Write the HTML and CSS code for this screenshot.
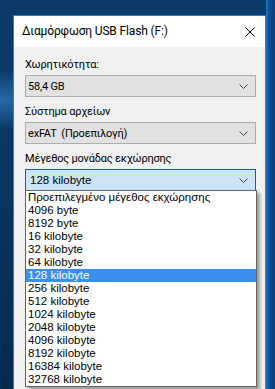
FILE: index.html
```html
<!DOCTYPE html>
<html lang="el">
<head>
    <meta charset="UTF-8">
    <title>Διαμόρφωση USB Flash (F:)</title>
    <link rel="stylesheet" href="styles.css">
</head>
<body>
    <div class="window">
        <div class="titlebar">
            <span class="title">Διαμόρφωση USB Flash (F:)</span>
            <svg class="close" width="10" height="10" viewBox="0 0 10 10">
                <path d="M0.5 0.5 L9.5 9.5 M9.5 0.5 L0.5 9.5" stroke="#000" stroke-width="1" fill="none"/>
            </svg>
        </div>

        <div class="content">
            <div class="field">
                <div class="label">Χωρητικότητα:</div>
                <div class="combo">
                    <span class="value">58,4 GB</span>
                    <svg class="chevron" width="9" height="5" viewBox="0 0 9 5">
                        <path d="M0.5 0.5 L4.5 4.5 L8.5 0.5" stroke="#404040" stroke-width="1" fill="none"/>
                    </svg>
                </div>
            </div>

            <div class="field">
                <div class="label">Σύστημα αρχείων</div>
                <div class="combo">
                    <span class="value">exFAT  (Προεπιλογή)</span>
                    <svg class="chevron" width="9" height="5" viewBox="0 0 9 5">
                        <path d="M0.5 0.5 L4.5 4.5 L8.5 0.5" stroke="#404040" stroke-width="1" fill="none"/>
                    </svg>
                </div>
            </div>

            <div class="field">
                <div class="label">Μέγεθος μονάδας εκχώρησης</div>
                <div class="combo focused">
                    <span class="value small">128 kilobyte</span>
                    <svg class="chevron" width="9" height="5" viewBox="0 0 9 5">
                        <path d="M0.5 0.5 L4.5 4.5 L8.5 0.5" stroke="#404040" stroke-width="1" fill="none"/>
                    </svg>

                    <ul class="listbox">
                        <li>Προεπιλεγμένο μέγεθος εκχώρησης</li>
                        <li>4096 byte</li>
                        <li>8192 byte</li>
                        <li>16 kilobyte</li>
                        <li>32 kilobyte</li>
                        <li>64 kilobyte</li>
                        <li class="selected">128 kilobyte</li>
                        <li>256 kilobyte</li>
                        <li>512 kilobyte</li>
                        <li>1024 kilobyte</li>
                        <li>2048 kilobyte</li>
                        <li>4096 kilobyte</li>
                        <li>8192 kilobyte</li>
                        <li>16384 kilobyte</li>
                        <li>32768 kilobyte</li>
                    </ul>
                </div>
            </div>
        </div>
    </div>
</body>
</html>
```

FILE: styles.css
```css
* {
    margin: 0;
    padding: 0;
    box-sizing: border-box;
}

body {
    width: 275px;
    height: 389px;
    overflow: hidden;
    font-family: Roboto, "Noto Sans", sans-serif;
    font-size: 11px;
    letter-spacing: -0.2px;
    color: #000;
    background:
        linear-gradient(90deg, transparent 266px, #1f78cc 266px, #0d4f96 269px, #083c78 275px),
        radial-gradient(ellipse 60px 30px at 0 100px, #2a6aa8, transparent),
        linear-gradient(180deg, #0c3a6a 0%, #0a355f 50%, #062a4e 100%);
    padding: 15px 0 0 13px;
}

.window {
    width: 253px;
    height: 380px;
    background-color: #f0f0f0;
    border: 1px solid #2a7fd0;
    border-bottom: none;
}

.titlebar {
    height: 31px;
    background-color: #fff;
    display: flex;
    align-items: center;
    justify-content: space-between;
    padding: 0 10px 0 8px;
}

.title {
    font-size: 12px;
    letter-spacing: -0.15px;
    line-height: 15px;
}

.content {
    padding: 3px 9px 0 11px;
}

.label {
    height: 25px;
    padding-top: 7px;
    line-height: 15px;
}

.combo {
    position: relative;
    height: 22px;
    background-color: #e1e1e1;
    border: 1px solid #adadad;
    display: flex;
    align-items: center;
    justify-content: space-between;
    padding: 0 7px 0 2px;
}

.combo .value {
    white-space: pre;
    line-height: 15px;
}

.combo .value.small {
    font-family: "Liberation Sans", Arial, sans-serif;
    font-size: 11.5px;
    letter-spacing: 0;
    padding-left: 2px;
}

.combo.focused {
    background-color: #cce4f7;
    border-color: #1e5e9e;
}

.chevron {
    display: block;
}

.listbox {
    position: absolute;
    left: -1px;
    right: -2px;
    top: 100%;
    list-style: none;
    background-color: #fff;
    border: 1px solid #646464;
    box-shadow: 3px 3px 3px rgba(0, 0, 0, 0.35);
    font-family: "Liberation Sans", Arial, sans-serif;
    font-size: 11.5px;
    letter-spacing: 0;
}

.listbox li {
    height: 13px;
    line-height: 13px;
    padding-left: 2px;
    white-space: nowrap;
}

.listbox li.selected {
    background-color: #3a8fea;
    color: #fff;
}
```
